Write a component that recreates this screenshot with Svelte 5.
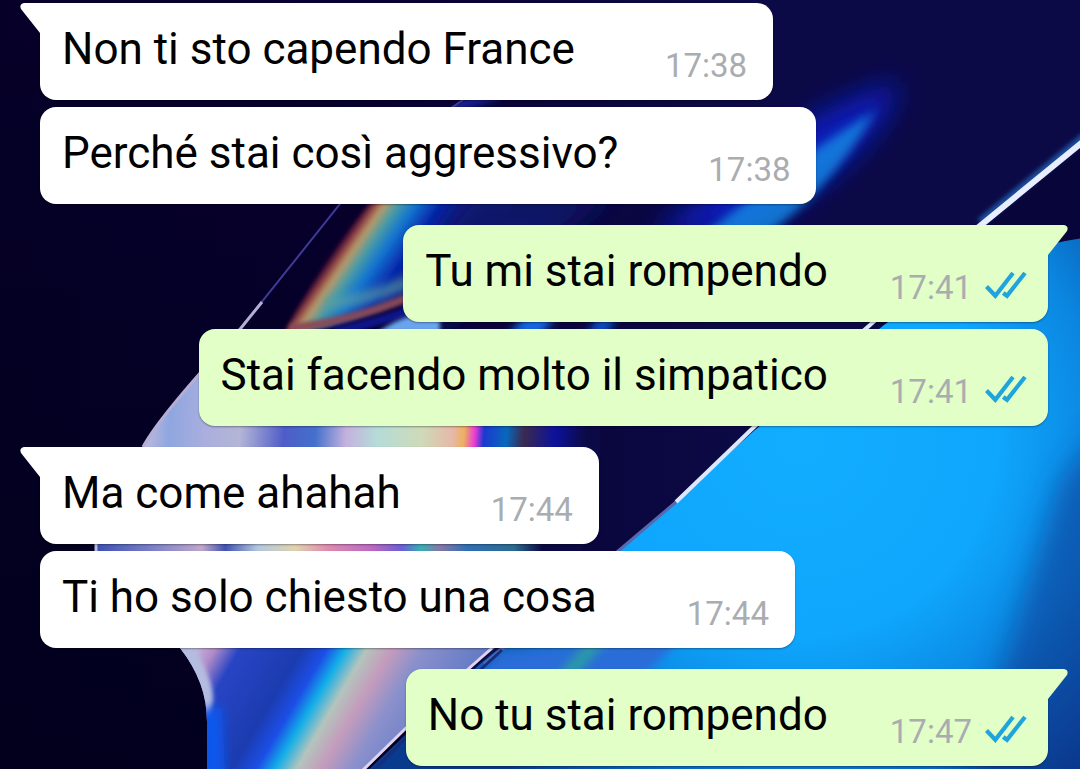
<script lang="ts">
  type Message = {
    text: string
    time: string
    sent: boolean
    first: boolean
  }

  const messages: Message[] = [
    { text: "Non ti sto capendo France", time: "17:38", sent: false, first: true },
    { text: "Perché stai così aggressivo?", time: "17:38", sent: false, first: false },
    { text: "Tu mi stai rompendo", time: "17:41", sent: true, first: true },
    { text: "Stai facendo molto il simpatico", time: "17:41", sent: true, first: false },
    { text: "Ma come ahahah", time: "17:44", sent: false, first: true },
    { text: "Ti ho solo chiesto una cosa", time: "17:44", sent: false, first: false },
    { text: "No tu stai rompendo", time: "17:47", sent: true, first: true },
  ]
</script>

<main class="chat">
  <svg class="wallpaper" viewBox="0 0 1080 769" preserveAspectRatio="xMidYMid slice" aria-hidden="true">
    <defs>
      <linearGradient id="night" x1="0" y1="0" x2="1" y2="0">
        <stop offset="0" stop-color="#060029" />
        <stop offset="0.35" stop-color="#080032" />
        <stop offset="0.7" stop-color="#0c0a46" />
      </linearGradient>
      <linearGradient id="dusk" x1="0" y1="0" x2="0" y2="1">
        <stop offset="0" stop-color="#000015" stop-opacity="0" />
        <stop offset="1" stop-color="#000018" stop-opacity="0.7" />
      </linearGradient>
      <radialGradient id="sky" gradientUnits="userSpaceOnUse" cx="800" cy="440" r="440">
        <stop offset="0" stop-color="#12adff" />
        <stop offset="0.45" stop-color="#0fa6fd" />
        <stop offset="0.68" stop-color="#0b86e0" />
        <stop offset="1" stop-color="#083a8e" />
      </radialGradient>
      <linearGradient id="glassTop" gradientUnits="userSpaceOnUse" x1="143" y1="420" x2="585" y2="450">
        <stop offset="0" stop-color="#c3bcdc" />
        <stop offset="0.06" stop-color="#8fa6e0" />
        <stop offset="0.14" stop-color="#a9aede" />
        <stop offset="0.22" stop-color="#b4b6d6" />
        <stop offset="0.32" stop-color="#4f5cc8" />
        <stop offset="0.39" stop-color="#4470cc" />
        <stop offset="0.46" stop-color="#c4b2de" />
        <stop offset="0.53" stop-color="#b4dcd8" />
        <stop offset="0.63" stop-color="#cfdab8" />
        <stop offset="0.7" stop-color="#e6b8a8" />
        <stop offset="0.725" stop-color="#eeb060" />
        <stop offset="0.75" stop-color="#e83ad8" />
        <stop offset="0.77" stop-color="#1c38d0" />
        <stop offset="0.82" stop-color="#0868bc" />
        <stop offset="0.86" stop-color="#3a2a50" />
        <stop offset="0.93" stop-color="#0c129c" />
        <stop offset="1" stop-color="#0c0a46" />
      </linearGradient>
      <linearGradient id="glassMid" gradientUnits="userSpaceOnUse" x1="95" y1="540" x2="560" y2="560">
        <stop offset="0" stop-color="#3c50b4" />
        <stop offset="0.12" stop-color="#7a80c8" />
        <stop offset="0.23" stop-color="#c0a8cc" />
        <stop offset="0.28" stop-color="#4254b4" />
        <stop offset="0.35" stop-color="#b4c8e0" />
        <stop offset="0.43" stop-color="#e0d4b0" />
        <stop offset="0.5" stop-color="#e08cb0" />
        <stop offset="0.6" stop-color="#b868c4" />
        <stop offset="0.66" stop-color="#6a60d8" />
        <stop offset="0.7" stop-color="#38b0b4" />
        <stop offset="0.74" stop-color="#8878a8" />
        <stop offset="0.8" stop-color="#3070b4" />
        <stop offset="0.9" stop-color="#2c6c90" />
        <stop offset="0.96" stop-color="#0c0a46" />
      </linearGradient>
      <linearGradient id="prism" gradientUnits="userSpaceOnUse" x1="190" y1="650" x2="420" y2="785">
        <stop offset="0" stop-color="#c9c2e2" />
        <stop offset="0.08" stop-color="#b08bc8" />
        <stop offset="0.16" stop-color="#2844c4" />
        <stop offset="0.36" stop-color="#1b3cb0" />
        <stop offset="0.44" stop-color="#1c4ee6" />
        <stop offset="0.5" stop-color="#12aee8" />
        <stop offset="0.57" stop-color="#b4c4bc" />
        <stop offset="0.65" stop-color="#c49cbc" />
        <stop offset="0.75" stop-color="#8a90cc" />
        <stop offset="1" stop-color="#5b76c4" />
      </linearGradient>
      <linearGradient id="fold" gradientUnits="userSpaceOnUse" x1="326" y1="264" x2="392" y2="309">
        <stop offset="0" stop-color="#2a0630" />
        <stop offset="0.08" stop-color="#8c3a44" />
        <stop offset="0.18" stop-color="#b89a68" />
        <stop offset="0.32" stop-color="#4a9ca4" />
        <stop offset="0.5" stop-color="#1476d0" />
        <stop offset="0.75" stop-color="#062cb0" />
        <stop offset="1" stop-color="#081c90" />
      </linearGradient>
      <filter id="soft2" x="-20%" y="-20%" width="140%" height="140%">
        <feGaussianBlur stdDeviation="2" />
      </filter>
      <filter id="soft5" x="-40%" y="-60%" width="180%" height="220%">
        <feGaussianBlur stdDeviation="5" />
      </filter>
      <filter id="soft14" x="-40%" y="-40%" width="180%" height="180%">
        <feGaussianBlur stdDeviation="14" />
      </filter>
      <clipPath id="body">
        <path d="M470 95 Q395 145 340 204 L241 328 Q160 415 143 447 Q110 500 95 548 L110 600 L180 648 Q207 682 207 722 V769 L363 769 L480 660 L617 550 L755 426 L870 325 L1080 145 L1080 0 L640 0 Z" />
      </clipPath>
    </defs>

    <rect width="1080" height="769" fill="url(#night)" />
    <rect width="400" height="769" fill="url(#dusk)" />

    <g clip-path="url(#body)">
      <!-- lavender glass -->
      <path d="M180 335 H600 V500 H60 Z" fill="url(#glassTop)" />
      <path d="M80 500 H600 L560 600 H80 Z" fill="url(#glassMid)" />
      <path d="M170 600 H560 L360 780 H200 Z" fill="url(#prism)" />
      <path d="M160 630 L190 640 Q214 680 213 700 L206 740 Q202 690 160 640 Z" fill="#b4bce0" filter="url(#soft2)" />
      <path d="M195 712 L222 706 L226 790 H195 Z" fill="#0a56ec" filter="url(#soft5)" />

      <!-- upper rainbow fold -->
      <path d="M372 200 Q320 262 284 334 Q360 325 420 292 L520 200 Z" fill="url(#fold)" filter="url(#soft2)" />
      <path d="M470 190 L620 190 L440 330 L400 300 Z" fill="#0c1468" filter="url(#soft14)" />
      <path d="M326 304 Q370 300 412 280" fill="none" stroke="#5aa0a4" stroke-width="12" opacity="0.7" filter="url(#soft5)" />
      <path d="M290 328 Q350 322 412 296" fill="none" stroke="#8a4a54" stroke-width="8" filter="url(#soft2)" />
      <path d="M335 332 Q380 322 430 304" fill="none" stroke="#10128c" stroke-width="9" filter="url(#soft2)" />
      <path d="M372 338 Q390 318 440 308 L440 338 Z" fill="#6aa4ec" filter="url(#soft2)" />
      <path d="M508 338 L526 312 H558 L540 338 Z" fill="#1464e0" filter="url(#soft5)" />
      <path d="M586 338 L600 312 H618 L606 338 Z" fill="#0e4cc0" filter="url(#soft5)" />

      <!-- blue flare -->
      <path d="M900 80 Q840 100 800 125 L650 235 L745 235 Q855 170 890 110 Z" fill="#0a22d8" opacity="0.8" filter="url(#soft14)" />
      <path d="M876 110 Q835 135 800 160 L690 245 L750 245 Q825 200 876 110 Z" fill="#1593e8" filter="url(#soft5)" opacity="0.75" />
      <path d="M440 112 L500 92" stroke="#1a2ac0" stroke-width="8" filter="url(#soft5)" />
    </g>

    <!-- thin edges of the glass -->
    <path d="M470 95 Q395 145 340 204 L241 328" fill="none" stroke="#3f3a98" stroke-width="2" />
    <path d="M262 302 L241 328 Q160 415 143 447" fill="none" stroke="#b4aed4" stroke-width="3" />
    <path d="M96 543 V553" fill="none" stroke="#b4bce0" stroke-width="3" />

    <!-- bright blue side -->
    <path d="M1080 145 L870 325 L1080 325 Z" fill="#07053a" />
    <path d="M1100 236 Q990 246 884 325 L755 430 L617 553 L480 664 L363 775 L1100 789 Z" fill="url(#sky)" />
    <path d="M1060 480 L1110 420 V800 H960 Z" fill="#0a3088" opacity="0.5" filter="url(#soft14)" />
    <path d="M500 652 L680 640 L640 680 L470 680 Z" fill="#2a6cd8" filter="url(#soft5)" />
    <path d="M588 642 L606 642 L576 676 L556 676 Z" fill="#2a9aa8" filter="url(#soft5)" />
    <path d="M1085 136 L980 222" stroke="#1c4d9c" stroke-width="8" filter="url(#soft2)" />
    <path d="M1085 140 L975 230" stroke="#e8eeff" stroke-width="6" />
    <path d="M975 230 L870 325 L755 426 L676 502" fill="none" stroke="#dbe8fa" stroke-width="4" />
    <path d="M676 502 L617 552 L484 664" fill="none" stroke="#5668b0" stroke-width="3" />
    <path d="M492 648 L466 671 L405 729 L361 772" fill="none" stroke="#e2d3ee" stroke-width="3" />
    <path d="M502 650 L412 732 L372 772" fill="none" stroke="#182c7c" stroke-width="3" />
  </svg>

  <ol class="messages">
    {#each messages as message}
      <li class="message" class:sent={message.sent} class:first={message.first}>
        {#if message.first}
          <svg class="tail" viewBox="0 0 21 31" aria-hidden="true">
            <path d="M21 0 H4 Q-1 1 1 6 L20 30 H21 Z" />
          </svg>
        {/if}
        <p>{message.text}</p>
        <div class="meta">
          <time>{message.time}</time>
          {#if message.sent}
            <svg class="ticks" viewBox="0 0 42 28" role="img" aria-label="Letto">
              <path d="M1.5 15.5 L10.3 24.8 L28 2 M18.2 22 L22 24.8 L40 2" />
            </svg>
          {/if}
        </div>
      </li>
    {/each}
  </ol>
</main>

<style>
  :global(body) {
    margin: 0;
    background-color: #07002e;
  }
  .chat {
    position: relative;
    min-height: 100vh;
    overflow: hidden;
    font-family: Roboto, "Liberation Sans", sans-serif;
  }
  .wallpaper {
    position: absolute;
    inset: 0;
    width: 100%;
    height: 100%;
  }
  .messages {
    position: relative;
    display: flex;
    flex-direction: column;
    align-items: flex-start;
    gap: 7px;
    margin: 0;
    padding: 3px 32px 3px 40px;
    list-style: none;
  }
  .message {
    --bubble: #fff;

    position: relative;
    display: flex;
    align-items: flex-end;
    gap: 90px;
    padding: 20px 26px 14px 22px;
    border-radius: 16px;
    background-color: var(--bubble);
    box-shadow: 0 1px 2px rgba(0, 0, 0, 0.35);

    &.first {
      border-top-left-radius: 0;
    }
    &.first:not(:first-child) {
      margin-top: 14px;
    }
    & p {
      margin: 0;
      padding-bottom: 11px;
      font-size: 44px;
      line-height: 52px;
      color: #000;
    }
  }
  .sent {
    --bubble: #e1ffc7;

    align-self: flex-end;
    gap: 62px;
    padding-right: 21px;

    &.first {
      border-top-left-radius: 16px;
      border-top-right-radius: 0;
    }
    & .tail {
      left: auto;
      right: -20px;
      transform: scaleX(-1);
    }
  }
  .tail {
    position: absolute;
    top: 0;
    left: -20px;
    width: 21px;
    height: 31px;
    fill: var(--bubble);
  }
  .meta {
    display: flex;
    align-items: center;
    gap: 13px;
    font-size: 33px;
    line-height: 40px;
    color: #a9adb0;
  }
  .ticks {
    width: 42px;
    height: 28px;
    padding-bottom: 6px;
    fill: none;
    stroke: #1fa5dc;
    stroke-width: 4.2;
  }
</style>
